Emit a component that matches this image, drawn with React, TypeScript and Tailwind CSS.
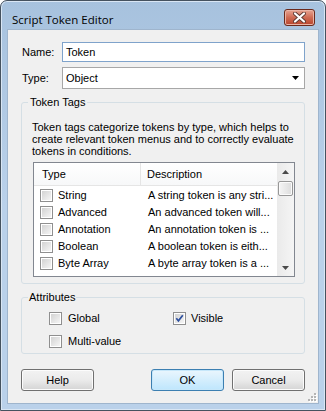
const rows = [
  ["String", "A string token is any stri..."],
  ["Advanced", "An advanced token will..."],
  ["Annotation", "An annotation token is ..."],
  ["Boolean", "A boolean token is eith..."],
  ["Byte Array", "A byte array token is a ..."],
];

function Check({ checked = false }: { checked?: boolean }) {
  return (
    <div className="w-[13px] h-[13px] shrink-0 border border-[#8f8f8f] bg-white p-[1px]">
      <div className="w-full h-full bg-gradient-to-br from-[#d3d3d3] to-[#f5f5f5] flex items-center justify-center">
        {checked && (
          <svg width="9" height="9" viewBox="0 0 9 9">
            <path d="M1.3 4.3 L3.4 6.8 L7.8 1.3" fill="none" stroke="#2d4f9e" strokeWidth="1.7" />
          </svg>
        )}
      </div>
    </div>
  );
}

function Arrow({ up = false, color = "#4a4a4a" }: { up?: boolean; color?: string }) {
  return (
    <svg width="7" height="4" viewBox="0 0 7 4">
      <path d={up ? "M0 4 L3.5 0 L7 4 Z" : "M0 0 L7 0 L3.5 4 Z"} fill={color} />
    </svg>
  );
}

function Button({ label, primary = false }: { label: string; primary?: boolean }) {
  return (
    <button
      className={
        primary
          ? "w-[73px] h-[22px] rounded-[3px] border border-[#3c7fb1] bg-gradient-to-b from-[#eaf6fd] to-[#bee6fd] shadow-[inset_0_0_0_1px_#c6e7fa] text-[11px] text-black"
          : "w-[73px] h-[22px] rounded-[3px] border border-[#707070] bg-gradient-to-b from-[#f2f2f2] via-[#ebebeb] to-[#d4d4d4] shadow-[inset_0_0_0_1px_#fcfcfc] text-[11px] text-black"
      }
    >
      {label}
    </button>
  );
}

export default function App() {
  return (
    <div className="w-[326px] h-[411px] bg-white font-['Liberation_Sans',Arial,sans-serif] text-[11px] text-black">
      <div className="w-full h-full flex flex-col rounded-t-[7px] border border-[#45525f] bg-gradient-to-b from-[#a7c2de] via-[#bad1ea] to-[#bad1ea] shadow-[inset_0_0_0_1px_#d9e6f4]">
        {/* title bar */}
        <div className="h-[29px] flex items-start shrink-0">
          <span className="mt-[11px] ml-[11px] leading-[15px] text-[11.5px] font-['Open_Sans',sans-serif] text-black">
            Script Token Editor
          </span>
          <div className="ml-auto mr-[10px] mt-[8px] w-[31px] h-[17px] rounded-[3px] border border-[#6b2a1c] bg-gradient-to-b from-[#e6a493] via-[#cf6b54] to-[#b8442c] shadow-[inset_0_0_0_1px_#eab4a6] flex items-center justify-center">
            <svg width="13" height="11" viewBox="0 0 13 11">
              <path d="M2 1.5 L11 9.5 M11 1.5 L2 9.5" stroke="#5e3a33" strokeWidth="4" strokeLinecap="round" />
              <path d="M2 1.5 L11 9.5 M11 1.5 L2 9.5" stroke="#ffffff" strokeWidth="2.2" strokeLinecap="round" />
            </svg>
          </div>
        </div>

        {/* client area */}
        <div className="mx-[7px] mb-[7px] flex-1 flex flex-col bg-[#f0f0f0] shadow-[0_0_0_1px_#9fb5cd] px-[13px] pt-[12px]">
          <div className="h-[20px] flex items-center">
            <span className="w-[41px] pl-[1px]">Name:</span>
            <div className="flex-1 h-full border border-[#7fa3cb] bg-white px-[3px] flex items-center">Token</div>
          </div>

          <div className="mt-[5px] h-[22px] flex items-center">
            <span className="w-[41px] pl-[1px]">Type:</span>
            <div className="flex-1 h-full border border-[#a7a7a7] bg-white pl-[3px] pr-[5px] flex items-center justify-between">
              <span>Object</span>
              <Arrow color="#000000" />
            </div>
          </div>

          <fieldset className="mt-[7px] border border-[#d5dfe5] rounded-[3px] pl-[10px] pb-[6px]">
            <legend className="-ml-[4px] px-[2px] leading-[13px]">Token Tags</legend>
            <p className="mt-[12px] leading-[12px] whitespace-nowrap">
              Token tags categorize tokens by type, which helps to
              <br />
              create relevant token menus and to correctly evaluate
              <br />
              tokens in conditions.
            </p>
            <div className="mt-[5px] ml-[1px] w-[262px] h-[115px] border border-[#828790] bg-white flex">
              <div className="flex-1 flex flex-col">
                <div className="h-[23px] flex border-b border-[#e5e5e5] bg-gradient-to-b from-white to-[#f7f8f9]">
                  <div className="w-[107px] pl-[8px] flex items-center border-r border-[#e5e5e5]">Type</div>
                  <div className="pl-[6px] flex items-center">Description</div>
                </div>
                <div className="pt-[1px] flex flex-col">
                  {rows.map(([t, d]) => (
                    <div key={t} className="h-[17px] flex items-center">
                      <div className="w-[107px] pl-[6px] flex items-center gap-[5px]">
                        <Check />
                        <span>{t}</span>
                      </div>
                      <span className="pl-[7px] whitespace-nowrap">{d}</span>
                    </div>
                  ))}
                </div>
              </div>
              <div className="w-[17px] flex flex-col bg-gradient-to-r from-[#eaeaea] to-[#f5f5f5]">
                <div className="h-[17px] flex items-center justify-center">
                  <Arrow up />
                </div>
                <div className="mx-[1px] mt-[1px] h-[15px] rounded-[2px] border border-[#979797] bg-gradient-to-r from-[#f5f5f5] to-[#dcdcdc] shadow-[inset_0_0_0_1px_#fbfbfb]" />
                <div className="flex-1" />
                <div className="h-[17px] flex items-center justify-center">
                  <Arrow />
                </div>
              </div>
            </div>
          </fieldset>

          <fieldset className="mt-[7px] border border-[#d5dfe5] rounded-[3px] pl-[27px] pt-[8px] pb-[5px]">
            <legend className="-ml-[21px] px-[1px] leading-[13px]">Attributes</legend>
            <div className="grid grid-cols-[124px_1fr] gap-y-[10px]">
              <div className="h-[13px] flex items-center gap-[6px]">
                <Check />
                <span>Global</span>
              </div>
              <div className="h-[13px] flex items-center gap-[5px]">
                <Check checked />
                <span>Visible</span>
              </div>
              <div className="h-[13px] flex items-center gap-[6px]">
                <Check />
                <span>Multi-value</span>
              </div>
            </div>
          </fieldset>

          <div className="mt-[15px] flex items-center gap-[8px]">
            <Button label="Help" />
            <div className="flex-1" />
            <Button label="OK" primary />
            <Button label="Cancel" />
          </div>

          <div className="mt-auto -mr-[12px] mb-[1px] flex justify-end">
            <svg width="10" height="10" viewBox="0 0 10 10">
              {[
                [7, 1],
                [4, 4],
                [7, 4],
                [1, 7],
                [4, 7],
                [7, 7],
              ].map(([x, y]) => (
                <g key={`${x}-${y}`}>
                  <rect x={x + 1} y={y + 1} width="2" height="2" fill="#ffffff" />
                  <rect x={x} y={y} width="2" height="2" fill="#b4b4b4" />
                </g>
              ))}
            </svg>
          </div>
        </div>
      </div>
    </div>
  );
}
